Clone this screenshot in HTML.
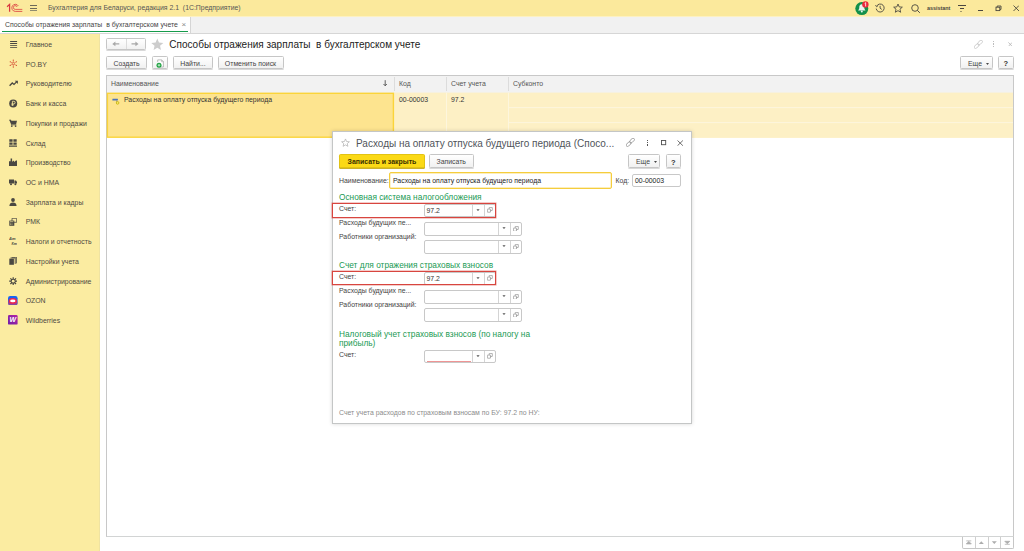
<!DOCTYPE html>
<html><head><meta charset="utf-8">
<style>
*{box-sizing:border-box;margin:0;padding:0}
html,body{width:1024px;height:551px;overflow:hidden;background:#fff}
body{font-family:"Liberation Sans",sans-serif;font-size:6.9px;color:#3b3b3b;position:relative}
.abs{position:absolute}
.t{position:absolute;white-space:nowrap;line-height:1}
#topbar{left:0;top:0;width:1024px;height:16px;background:#fbe99c}
#tabbar{left:0;top:16px;width:1024px;height:18px;background:#f1f1f1;border-bottom:1px solid #d6d6d6}
#tab{left:0;top:16px;width:191px;height:17px;background:#fff;border-right:1px solid #d5d5d5}
#tabline{left:2px;top:31px;width:186px;height:1px;background:#169b4b}
#side{left:0;top:34px;width:100px;height:517px;background:#fbeca1;border-right:1px solid #efe3a2}
.nav{left:25.7px;color:#4d4a42;font-size:6.9px}
.btn{position:absolute;border:1px solid #c6c6c6;border-radius:1.5px;background:linear-gradient(#fff,#f1f1f1);box-shadow:0 1px 0 #d9d9d9;color:#444;text-align:center;font-size:6.9px;white-space:nowrap}
.btn span{position:absolute;left:0;right:0;line-height:1}
#list{left:106px;top:75px;width:907.5px;height:461.5px;border:1px solid #c8c8c8;border-bottom-color:#d2d4d4;background:#fff}
#lhead{left:107px;top:76px;width:906px;height:17px;background:#f2f2f2}
.car{display:inline-block;width:0;height:0;border-left:1.8px solid transparent;border-right:1.8px solid transparent;border-top:2px solid #555;vertical-align:1.5px}
.car2{width:0;height:0;border-left:1.8px solid transparent;border-right:1.8px solid transparent;border-top:2px solid #555}
.inp{position:absolute;border:1px solid #c8c8c8;border-radius:2px;background:#fff}
.grp{color:#1a9a53;font-size:8.3px}
#dlg{left:332px;top:131px;width:360px;height:293px;background:#fff;border:1px solid #c4c6c6;box-shadow:0 0 4px rgba(0,0,0,.16)}
</style></head><body>

<!-- top bar -->
<div class="abs" id="topbar"></div>
<div class="t" style="left:48px;top:5.1px;color:#555">Бухгалтерия для Беларуси, редакция 2.1&nbsp; (1С:Предприятие)</div>

<!-- top icons -->
<svg class="abs" style="left:6px;top:3px" width="17" height="10" viewBox="0 0 17 10"><g fill="none" stroke="#d9383e" transform="translate(.5,.4)"><path d="M.6 3.3L3.1 1V8.3" stroke-width="1.25"/><path d="M11.9 2.6A3.55 3.55 0 1 0 8.8 8H15.8" stroke-width=".8"/><path d="M10.6 3.6A1.9 1.9 0 1 0 8.8 6H15.8" stroke-width=".75"/></g></svg>
<div class="abs" style="left:30px;top:5.1px;width:7.3px;height:1px;background:#6d6958"></div>
<div class="abs" style="left:30px;top:7.7px;width:7.3px;height:1px;background:#6d6958"></div>
<div class="abs" style="left:30px;top:10.3px;width:7.3px;height:1px;background:#8f8c70"></div>
<!-- bell -->
<svg class="abs" style="left:854.5px;top:.5px" width="15" height="15" viewBox="0 0 15 15"><circle cx="6.8" cy="7.6" r="6.5" fill="#13904a"/><path d="M6.8 3.2c-1.8 0-2.5 1.4-2.5 3 0 1.7-.6 2.6-1.3 3.3h7.6c-.7-.7-1.3-1.6-1.3-3.3 0-1.6-.7-3-2.5-3z" fill="#e9f5ee"/><circle cx="6.8" cy="10.6" r="1" fill="#e9f5ee"/><circle cx="10.4" cy="3.4" r="3.2" fill="#ea2a3c"/><path d="M9.700 2.500l.95-.8v3.700" stroke="#fff" stroke-width=".8" fill="none"/></svg>
<!-- history -->
<svg class="abs" style="left:874.5px;top:3px" width="10" height="10" viewBox="0 0 10 10"><path d="M1.6 3.2A4 4 0 1 1 1.2 5.6" fill="none" stroke="#4a4740" stroke-width=".9"/><path d="M.3 2.2l1.4 1.6 1.5-1.3" fill="none" stroke="#4a4740" stroke-width=".8"/><path d="M5.1 2.8V5.2l1.7 1.2" fill="none" stroke="#4a4740" stroke-width=".9"/></svg>
<!-- star -->
<svg class="abs" style="left:892.5px;top:3px" width="10" height="10" viewBox="0 0 24 24"><path d="M12 2.5l2.9 6.9 7.5.6-5.7 4.9 1.7 7.3L12 18.3l-6.4 3.9 1.7-7.3-5.7-4.9 7.5-.6z" fill="none" stroke="#4a4740" stroke-width="2.1" stroke-linejoin="round"/></svg>
<!-- search -->
<svg class="abs" style="left:911px;top:3.5px" width="10" height="10" viewBox="0 0 10 10"><circle cx="4" cy="4" r="3.3" fill="none" stroke="#4a4740" stroke-width=".9"/><path d="M6.4 6.4l2.4 2.4" stroke="#4a4740" stroke-width="1"/></svg>
<div class="t" style="left:927px;top:5.6px;font-size:5.4px;font-weight:bold;color:#4a4740">assistant</div>
<!-- menu -->
<div class="abs" style="left:958px;top:5.3px;width:7.5px;height:1px;background:#4a4740"></div>
<div class="abs" style="left:959.5px;top:7.7px;width:4.5px;height:1px;background:#4a4740"></div>
<div class="abs" style="left:960.3px;top:10.7px;width:0;height:0;border-left:1.5px solid transparent;border-right:1.5px solid transparent;border-top:1.7px solid #4a4740"></div>
<!-- window btns -->
<div class="abs" style="left:977.5px;top:10.2px;width:5px;height:1px;background:#4a4740"></div>
<svg class="abs" style="left:995px;top:5px" width="7" height="7" viewBox="0 0 7 7"><path d="M2.2 2V1H6V4.4H5" fill="none" stroke="#4a4740" stroke-width=".9"/><rect x="1" y="2.2" width="3.8" height="3.4" fill="none" stroke="#4a4740" stroke-width=".9"/></svg>
<svg class="abs" style="left:1012.5px;top:5px" width="6.5" height="6.5" viewBox="0 0 6.5 6.5"><path d="M.5 .5l5.5 5.5M6 .5L.5 6" stroke="#4a4740" stroke-width=".9"/></svg>
<!-- form right icons -->
<svg class="abs" style="left:973.6px;top:39.6px" width="9" height="9" viewBox="0 0 9 9"><g fill="none" stroke="#c6c6c6" stroke-width=".85"><rect x="-2.9" y="-1.4" width="5.8" height="2.8" rx="1.4" transform="translate(2.6,6.1) rotate(-45)"/><rect x="-2.9" y="-1.4" width="5.8" height="2.8" rx="1.4" transform="translate(6,2.6) rotate(-45)"/></g></svg>
<div class="abs" style="left:993.2px;top:41px;width:1.3px;height:1.3px;background:#bdbdbd"></div><div class="abs" style="left:993.2px;top:43.3px;width:1.3px;height:1.3px;background:#bdbdbd"></div><div class="abs" style="left:993.2px;top:45.6px;width:1.3px;height:1.3px;background:#bdbdbd"></div>
<svg class="abs" style="left:1007.7px;top:41.7px" width="4.6" height="4.8" viewBox="0 0 4.6 4.8"><path d="M.4 .4l3.8 4M4.2 .4l-3.8 4" stroke="#b4b4b4" stroke-width=".8"/></svg>

<!-- tab bar -->
<div class="abs" id="tabbar"></div>
<div class="abs" id="tab"></div>
<div class="abs" style="left:0;top:16px;width:1024px;height:1px;background:#fdf1c2"></div>
<div class="t" style="left:5px;top:21.5px;color:#444">Способы отражения зарплаты&nbsp; в бухгалтерском учете</div>
<div class="t" style="left:181.5px;top:20.5px;color:#888;font-size:8px">×</div>
<div class="abs" id="tabline"></div>

<!-- sidebar -->
<div class="abs" id="side"></div>
<svg class="abs" style="left:10px;top:40px" width="8" height="9" viewBox="0 0 8 9"><path d="M.1 1.5h7M.1 3.5h7" stroke="#4a4842" stroke-width="1"/><path d="M.1 5.5h7M.1 7.5h7" stroke="#6e6a55" stroke-width="1"/></svg>
<div class="t nav" style="top:41.8px">Главное</div>
<svg class="abs" style="left:9px;top:59px" width="9" height="9" viewBox="0 0 9 9"><g transform="translate(.3,.6)"><g stroke="#d44a30" stroke-width=".55"><path d="M4 .3v7.4M.8 2.1l6.4 3.8M7.2 2.1L.8 5.900"/></g><circle cx="4" cy="4" r="1.1" fill="#fbeca1" stroke="#d44a30" stroke-width=".55"/><g fill="#d44a30"><circle cx="4" cy=".5" r=".55"/><circle cx="4" cy="7.5" r=".55"/><circle cx=".9" cy="2.2" r=".55"/><circle cx="7.1" cy="2.2" r=".55"/><circle cx=".9" cy="5.8" r=".55"/><circle cx="7.1" cy="5.8" r=".55"/></g></g></svg>
<div class="t nav" style="top:61.5px">PO.BY</div>
<svg class="abs" style="left:9px;top:79px" width="10" height="9" viewBox="0 0 10 9"><path d="M.6 6.8L3.3 4 5 5.400 7.800 2.600" stroke="#4a4842" stroke-width="1.3" fill="none"/><path d="M5.800 1.800h3.100v3.100z" fill="#4a4842"/></svg>
<div class="t nav" style="top:81.3px">Руководителю</div>
<svg class="abs" style="left:9px;top:99px" width="9" height="9" viewBox="0 0 9 9"><circle cx="4.2" cy="4.4" r="4" fill="#4a4842"/><path d="M3.400 6.900V2.300h1.400a1.300 1.300 0 0 1 0 2.600H2.500M2.500 5.900h2.300" stroke="#fbeca1" stroke-width=".85" fill="none"/></svg>
<div class="t nav" style="top:101.0px">Банк и касса</div>
<svg class="abs" style="left:9.0px;top:118.9px" width="8" height="8" viewBox="0 0 8 8"><path d="M0 .8h1.6l.5 1h5.9l-.9 3.4H2.4z" fill="#4a4842"/><path d="M1.6 .8l.9 5h4.8" stroke="#4a4842" stroke-width=".8" fill="none"/><circle cx="2.8" cy="7.1" r=".9" fill="#4a4842"/><circle cx="6.6" cy="7.1" r=".9" fill="#4a4842"/></svg>
<div class="t nav" style="top:120.7px">Покупки и продажи</div>
<svg class="abs" style="left:9.0px;top:138.5px" width="8" height="8" viewBox="0 0 8 8"><path d="M.3 .3h3.3v2.5H.3zM4.4 .3h3.3v2.5H4.4zM.3 3.5h3.3v2.3H.3zM4.4 3.5h3.3v2.3H4.4zM0 6.5h8v1.2H0z" fill="#4a4842"/></svg>
<div class="t nav" style="top:140.5px">Склад</div>
<svg class="abs" style="left:9.0px;top:158.4px" width="8" height="8" viewBox="0 0 8 8"><path d="M0 8V3.2h1.6V.4h1.5v3.4L5 2.4v1.6l2-1.6h1V8z" fill="#4a4842"/></svg>
<div class="t nav" style="top:160.2px">Производство</div>
<svg class="abs" style="left:9.0px;top:178.1px" width="8" height="8" viewBox="0 0 8 8"><path d="M0 1.6h5v4H0zM5.4 2.6h1.6l1 1.4v1.6H5.4z" fill="#4a4842"/><circle cx="2" cy="6.2" r="1" fill="#4a4842"/><circle cx="6.4" cy="6.2" r="1" fill="#4a4842"/></svg>
<div class="t nav" style="top:179.9px">ОС и НМА</div>
<svg class="abs" style="left:9.0px;top:197.8px" width="8" height="8" viewBox="0 0 8 8"><circle cx="4" cy="2" r="1.9" fill="#4a4842"/><path d="M.4 8c0-2.6 1.6-3.6 3.6-3.6S7.6 5.4 7.6 8z" fill="#4a4842"/></svg>
<div class="t nav" style="top:199.6px">Зарплата и кадры</div>
<svg class="abs" style="left:9.0px;top:217.6px" width="8" height="8" viewBox="0 0 8 8"><path d="M3 .3h4.7v4H3z" fill="none" stroke="#4a4842" stroke-width=".8"/><path d="M.3 2.6h5v5.2h-5z" fill="#4a4842"/><path d="M1 3.6h3.4M1.2 5.2h.8M2.6 5.2h.8M1.2 6.5h.8M2.6 6.5h.8" stroke="#fbeca1" stroke-width=".6"/></svg>
<div class="t nav" style="top:219.4px">РМК</div>
<svg class="abs" style="left:9.0px;top:237.3px" width="8" height="8" viewBox="0 0 8 8"><text x="0" y="3.4" font-size="4" font-weight="bold" font-style="italic" fill="#4a4842" font-family="Liberation Sans">Ат</text><text x="2.6" y="7.6" font-size="3.6" font-weight="bold" font-style="italic" fill="#4a4842" font-family="Liberation Sans">Кт</text></svg>
<div class="t nav" style="top:239.1px">Налоги и отчетность</div>
<svg class="abs" style="left:9.0px;top:257.0px" width="8" height="8" viewBox="0 0 8 8"><path d="M.3 1.6h4.6v6.2H.3z" fill="#4a4842"/><path d="M1.6 .9h4.6v6M3 .2h4.7v6.2" stroke="#4a4842" stroke-width=".9" fill="none"/></svg>
<div class="t nav" style="top:258.8px">Настройки учета</div>
<svg class="abs" style="left:8.8px;top:276.8px" width="8.4" height="8.4" viewBox="0 0 8.4 8.4"><g stroke="#4a4842" stroke-width="1.2"><path d="M4.2 .2v8M.2 4.2h8M1.4 1.4l5.6 5.6M7 1.4L1.4 7"/></g><circle cx="4.2" cy="4.2" r="2.5" fill="#4a4842"/><circle cx="4.2" cy="4.2" r="1.4" fill="#fbeca1"/></svg>
<div class="t nav" style="top:278.6px">Администрирование</div>
<svg class="abs" style="left:8.4px;top:295.7px" width="9.6" height="9.3" viewBox="0 0 9.6 9.3"><rect x="0" y="0" width="9.6" height="9.3" rx="2.2" fill="#1565f5"/><path d="M0 5.5h9.6V7.1a2.2 2.2 0 0 1-2.2 2.2H2.2A2.2 2.2 0 0 1 0 7.100z" fill="#e8305a" opacity=".55"/><ellipse cx="4.8" cy="4.9" rx="4.2" ry="2.8" fill="#f0244e"/><ellipse cx="4.8" cy="4.9" rx="2.7" ry="1.3" fill="#fff"/></svg>
<div class="t nav" style="top:298.3px">OZON</div>
<svg class="abs" style="left:8.4px;top:315.2px" width="9.6" height="9.6" viewBox="0 0 9.6 9.6"><defs><linearGradient id="wb" x1="0" y1="1" x2="1" y2="0"><stop offset="0" stop-color="#6f1fa8"/><stop offset="1" stop-color="#b224a4"/></linearGradient></defs><rect x="0" y="0" width="9.6" height="9.6" rx="1.2" fill="url(#wb)"/><text x="4.8" y="7.3" font-size="7" font-weight="bold" font-style="italic" fill="#fff" text-anchor="middle" font-family="Liberation Sans">W</text></svg>
<div class="t nav" style="top:318.0px">Wildberries</div>

<!-- main -->
<div class="btn" style="left:106px;top:38px;width:40px;height:12px"></div>
<div class="abs" style="left:126px;top:39px;width:1px;height:10px;background:#dcdcdc"></div>
<svg class="abs" style="left:111.7px;top:41px" width="8" height="6" viewBox="0 0 8 6"><path d="M.3 2.9L3.4 .5V2.3H7.3V3.5H3.4V5.3z" fill="#a8a8a8"/></svg>
<svg class="abs" style="left:131.2px;top:41px" width="8" height="6" viewBox="0 0 8 6"><path d="M7.5 2.9L4.4 .5V2.3H.5V3.5H4.4V5.3z" fill="#a8a8a8"/></svg>
<svg class="abs" style="left:151.3px;top:38px" width="12.6" height="12.6" viewBox="0 0 24 24"><path d="M12 1l3.2 7.6 8.3.7-6.3 5.4 1.9 8.1L12 18.5 4.9 22.8l1.9-8.1L.5 9.3l8.3-.7z" fill="#cdcdcd"/></svg>
<div class="t" style="left:169.3px;top:39.9px;font-size:10px;color:#222">Способы отражения зарплаты&nbsp; в бухгалтерском учете</div>

<div class="btn" style="left:106px;top:56px;width:41px;height:13px"><span style="top:3.8px">Создать</span></div>
<div class="btn" style="left:152px;top:56px;width:15.5px;height:13px"></div>
<svg class="abs" style="left:155.5px;top:58.5px" width="8.5" height="9" viewBox="0 0 8.5 9"><path d="M1.7 3V.9h4L7.4 2.6V8H4.6" fill="#fff" stroke="#a3a3a3" stroke-width=".7"/><path d="M5.6 .9V2.7H7.4" fill="none" stroke="#a3a3a3" stroke-width=".6"/><circle cx="3" cy="6.2" r="2.5" fill="#18a03c"/><path d="M3 4.8v2.8M1.6 6.2h2.8" stroke="#e8f8ec" stroke-width=".8"/></svg>
<div class="btn" style="left:173px;top:56px;width:40px;height:13px"><span style="top:3.8px">Найти...</span></div>
<div class="btn" style="left:217.5px;top:56px;width:66px;height:13px"><span style="top:3.8px">Отменить поиск</span></div>
<div class="btn" style="left:960px;top:56px;width:33px;height:13px"><span style="top:3.8px;left:7px;text-align:left">Еще</span><svg class="abs" style="left:24.8px;top:5.5px" width="3" height="2" viewBox="0 0 3 2"><path d="M0 .1h3L1.5 1.9z" fill="#484848"/></svg></div>
<div class="btn" style="left:998px;top:56px;width:15.5px;height:13px"><span style="top:2.5px;font-weight:bold;font-size:7.5px;color:#333">?</span></div>

<div class="abs" id="list"></div>
<div class="abs" id="lhead"></div>
<div class="abs" style="left:394px;top:77px;width:1px;height:14px;background:#dcdcdc"></div>
<div class="abs" style="left:446px;top:77px;width:1px;height:14px;background:#dcdcdc"></div>
<div class="abs" style="left:508px;top:77px;width:1px;height:14px;background:#dcdcdc"></div>
<div class="t" style="left:111px;top:81px;color:#555">Наименование</div>
<div class="t" style="left:399px;top:81px;color:#555">Код</div>
<div class="t" style="left:451px;top:81px;color:#555">Счет учета</div>
<div class="t" style="left:513px;top:81px;color:#555">Субконто</div>
<svg class="abs" style="left:382.5px;top:80px" width="4.4" height="6.4" viewBox="0 0 4.4 6.4"><path d="M2.2 .2V5.6M.5 4L2.2 5.8 3.9 4" fill="none" stroke="#3c3c3c" stroke-width=".8"/></svg>
<!-- row -->
<svg class="abs" style="left:106px;top:92px" width="908" height="47" viewBox="0 0 908 47">
<rect x="288" y=".6" width="619" height="45.3" fill="#fdf0c5"/>
<rect x="340.1" y=".6" width=".9" height="45.3" fill="#fdf7e0"/>
<rect x="402.1" y=".6" width=".9" height="45.3" fill="#fdf7e0"/>
<rect x="403" y="15.2" width="504" height=".9" fill="#fdf7e0"/>
<rect x="403" y="30.2" width="504" height=".9" fill="#fdf7e0"/>
<rect x="1.4" y="1.3" width="286" height="43.9" fill="#fde48f" stroke="#fbd43a" stroke-width="1.4"/>
</svg>
<svg class="abs" style="left:112px;top:97.5px" width="8" height="7" viewBox="0 0 8 7"><rect x=".4" y=".8" width="5.5" height="1.7" rx=".3" fill="#4f74b8"/><path d="M4.6 2.5v1.5h.8" stroke="#8a8460" stroke-width=".6" fill="none"/><circle cx="5.6" cy="4.9" r="1.3" fill="#f8ea70" stroke="#c4b000" stroke-width=".8"/></svg>
<div class="t" style="left:124px;top:97.3px;color:#333">Расходы на оплату отпуска будущего периода</div>
<div class="t" style="left:399px;top:97.3px;color:#333">00-00003</div>
<div class="t" style="left:451px;top:97.3px;color:#333">97.2</div>
<!-- scroll buttons -->
<div class="abs" style="left:962px;top:537px;width:52px;height:11.5px;border:1px solid #c6c6c6;border-top:none;border-radius:0 0 2px 2px;background:#fff"></div>
<div class="abs" style="left:975px;top:537px;width:1px;height:11px;background:#cfcfcf"></div>
<div class="abs" style="left:987.5px;top:537px;width:1px;height:11px;background:#cfcfcf"></div>
<div class="abs" style="left:1000px;top:537px;width:1px;height:11px;background:#cfcfcf"></div>
<svg class="abs" style="left:962px;top:537px" width="52" height="11" viewBox="0 0 52 11">
<path d="M4.3 3.9h5M4.3 6.9L6.8 4.4 9.3 6.9z" fill="#adadad" stroke="#adadad" stroke-width=".8"/>
<path d="M16.8 7L19.3 4.3 21.8 7z" fill="#adadad"/>
<path d="M29.8 4.3L32.3 7 34.8 4.3z" fill="#adadad"/>
<path d="M42.8 7.3h5M42.8 4.3L45.3 6.8 47.8 4.3z" fill="#adadad" stroke="#adadad" stroke-width=".8"/>
</svg>

<!-- dialog -->
<div class="abs" id="dlg"></div>
<svg class="abs" style="left:341px;top:138px" width="9" height="9" viewBox="0 0 24 24"><path d="M12 2.5l2.9 6.9 7.5.6-5.7 4.9 1.7 7.3L12 18.3l-6.4 3.9 1.7-7.3-5.7-4.9 7.5-.6z" fill="none" stroke="#b2b2b2" stroke-width="2"/></svg>
<div class="t" style="left:356px;top:138.5px;font-size:10px;color:#50545a">Расходы на оплату отпуска будущего периода (Спосо...</div>
<svg class="abs" style="left:625.7px;top:137.8px" width="9" height="9" viewBox="0 0 9 9"><g fill="none" stroke="#959595" stroke-width=".85"><rect x="-2.9" y="-1.4" width="5.8" height="2.8" rx="1.4" transform="translate(2.6,6.1) rotate(-45)"/><rect x="-2.9" y="-1.4" width="5.8" height="2.8" rx="1.4" transform="translate(6,2.6) rotate(-45)"/></g></svg>
<div class="abs" style="left:646.5px;top:139.7px;width:1.3px;height:1.3px;background:#555"></div><div class="abs" style="left:646.5px;top:142px;width:1.3px;height:1.3px;background:#555"></div><div class="abs" style="left:646.5px;top:144.3px;width:1.3px;height:1.3px;background:#555"></div>
<svg class="abs" style="left:660.6px;top:140px" width="6" height="6" viewBox="0 0 6 6"><rect x=".5" y=".5" width="4.2" height="4.2" fill="none" stroke="#505050" stroke-width=".9"/></svg>
<svg class="abs" style="left:676.7px;top:139.6px" width="6.5" height="6.5" viewBox="0 0 6.5 6.5"><path d="M.5 .5l5.4 5.2M5.9 .5L.5 5.7" stroke="#606060" stroke-width=".9"/></svg>
<div class="btn" style="left:339px;top:154px;width:86px;height:14px;background:#fbd916;border-color:#e2c313;box-shadow:0 1px 0 #cdb22a"><span style="top:4.2px;color:#3a3000;font-weight:bold;font-size:6.95px">Записать и закрыть</span></div>
<div class="btn" style="left:429px;top:154px;width:44.5px;height:14px"><span style="top:4px">Записать</span></div>
<div class="btn" style="left:628px;top:154px;width:32px;height:14px"><span style="top:4px;left:7px;text-align:left">Еще</span><svg class="abs" style="left:24.5px;top:6px" width="3" height="2" viewBox="0 0 3 2"><path d="M0 .1h3L1.5 1.9z" fill="#484848"/></svg></div>
<div class="btn" style="left:665.5px;top:154px;width:15.5px;height:14px"><span style="top:3.5px;font-weight:bold;font-size:7.5px;color:#333">?</span></div>
<div class="t" style="left:339px;top:177.5px;color:#444">Наименование:</div>
<div class="inp" style="left:389px;top:172px;width:223px;height:16.5px;border:1px solid #f5cd3c;box-shadow:inset 0 0 0 .4px #f9dd7c"></div>
<div class="t" style="left:393px;top:177.5px;color:#222">Расходы на оплату отпуска будущего периода</div>
<div class="t" style="left:615.5px;top:177.5px;color:#444">Код:</div>
<div class="inp" style="left:632px;top:174px;width:49px;height:13px"></div>
<div class="t" style="left:635px;top:177.5px;color:#222">00-00003</div>
<div class="t grp" style="left:339px;top:192.5px">Основная система налогообложения</div>
<div class="t" style="left:339px;top:205.7px;color:#444">Счет:</div>
<div class="inp" style="left:424.0px;top:204px;width:71.5px;height:13px"></div>
<div class="abs" style="left:472.0px;top:205px;width:1px;height:11px;background:#d4d4d4"></div>
<div class="abs" style="left:483.5px;top:205px;width:1px;height:11px;background:#d4d4d4"></div>
<svg class="abs" style="left:476.2px;top:208.9px" width="4" height="2.4" viewBox="0 0 4 2.4"><path d="M.4 .3h3.2L2 2.1z" fill="#555"/></svg>
<svg class="abs" style="left:486.9px;top:207.2px" width="5.8" height="5.8" viewBox="0 0 5.8 5.8"><rect x="2.2" y=".4" width="3.1" height="3.1" rx=".25" fill="#fff" stroke="#8a8a8a" stroke-width=".65"/><rect x=".4" y="2.1" width="3.1" height="3.1" rx=".25" fill="#fff" stroke="#8a8a8a" stroke-width=".65"/></svg>
<div class="t" style="left:426.5px;top:207.7px;color:#333">97.2</div>
<div class="abs" style="left:331.5px;top:203px;width:164.5px;height:14.5px;border:1px solid #d8453f;box-shadow:0 0 0 .5px rgba(216,69,63,.55)"></div>
<div class="t" style="left:339px;top:220px;color:#444">Расходы будущих пе...</div>
<div class="inp" style="left:424.0px;top:222px;width:97.5px;height:14px"></div>
<div class="abs" style="left:498.0px;top:223px;width:1px;height:12px;background:#d4d4d4"></div>
<div class="abs" style="left:509.5px;top:223px;width:1px;height:12px;background:#d4d4d4"></div>
<svg class="abs" style="left:502.2px;top:227.4px" width="4" height="2.4" viewBox="0 0 4 2.4"><path d="M.4 .3h3.2L2 2.1z" fill="#555"/></svg>
<svg class="abs" style="left:512.9px;top:225.7px" width="5.8" height="5.8" viewBox="0 0 5.8 5.8"><rect x="2.2" y=".4" width="3.1" height="3.1" rx=".25" fill="#fff" stroke="#8a8a8a" stroke-width=".65"/><rect x=".4" y="2.1" width="3.1" height="3.1" rx=".25" fill="#fff" stroke="#8a8a8a" stroke-width=".65"/></svg>
<div class="t" style="left:339px;top:233.8px;color:#444">Работники организаций:</div>
<div class="inp" style="left:424.0px;top:240px;width:97.5px;height:14px"></div>
<div class="abs" style="left:498.0px;top:241px;width:1px;height:12px;background:#d4d4d4"></div>
<div class="abs" style="left:509.5px;top:241px;width:1px;height:12px;background:#d4d4d4"></div>
<svg class="abs" style="left:502.2px;top:245.4px" width="4" height="2.4" viewBox="0 0 4 2.4"><path d="M.4 .3h3.2L2 2.1z" fill="#555"/></svg>
<svg class="abs" style="left:512.9px;top:243.7px" width="5.8" height="5.8" viewBox="0 0 5.8 5.8"><rect x="2.2" y=".4" width="3.1" height="3.1" rx=".25" fill="#fff" stroke="#8a8a8a" stroke-width=".65"/><rect x=".4" y="2.1" width="3.1" height="3.1" rx=".25" fill="#fff" stroke="#8a8a8a" stroke-width=".65"/></svg>
<div class="t grp" style="left:339px;top:261.3px">Счет для отражения страховых взносов</div>
<div class="t" style="left:339px;top:273.7px;color:#444">Счет:</div>
<div class="inp" style="left:424.0px;top:272px;width:71.5px;height:13px"></div>
<div class="abs" style="left:472.0px;top:273px;width:1px;height:11px;background:#d4d4d4"></div>
<div class="abs" style="left:483.5px;top:273px;width:1px;height:11px;background:#d4d4d4"></div>
<svg class="abs" style="left:476.2px;top:276.9px" width="4" height="2.4" viewBox="0 0 4 2.4"><path d="M.4 .3h3.2L2 2.1z" fill="#555"/></svg>
<svg class="abs" style="left:486.9px;top:275.2px" width="5.8" height="5.8" viewBox="0 0 5.8 5.8"><rect x="2.2" y=".4" width="3.1" height="3.1" rx=".25" fill="#fff" stroke="#8a8a8a" stroke-width=".65"/><rect x=".4" y="2.1" width="3.1" height="3.1" rx=".25" fill="#fff" stroke="#8a8a8a" stroke-width=".65"/></svg>
<div class="t" style="left:426.5px;top:275.6px;color:#333">97.2</div>
<div class="abs" style="left:331.5px;top:271px;width:164.5px;height:14px;border:1px solid #d8453f;box-shadow:0 0 0 .5px rgba(216,69,63,.55)"></div>
<div class="t" style="left:339px;top:287.8px;color:#444">Расходы будущих пе...</div>
<div class="inp" style="left:424.0px;top:290px;width:97.5px;height:14px"></div>
<div class="abs" style="left:498.0px;top:291px;width:1px;height:12px;background:#d4d4d4"></div>
<div class="abs" style="left:509.5px;top:291px;width:1px;height:12px;background:#d4d4d4"></div>
<svg class="abs" style="left:502.2px;top:295.4px" width="4" height="2.4" viewBox="0 0 4 2.4"><path d="M.4 .3h3.2L2 2.1z" fill="#555"/></svg>
<svg class="abs" style="left:512.9px;top:293.7px" width="5.8" height="5.8" viewBox="0 0 5.8 5.8"><rect x="2.2" y=".4" width="3.1" height="3.1" rx=".25" fill="#fff" stroke="#8a8a8a" stroke-width=".65"/><rect x=".4" y="2.1" width="3.1" height="3.1" rx=".25" fill="#fff" stroke="#8a8a8a" stroke-width=".65"/></svg>
<div class="t" style="left:339px;top:302.3px;color:#444">Работники организаций:</div>
<div class="inp" style="left:424.0px;top:308px;width:97.5px;height:14px"></div>
<div class="abs" style="left:498.0px;top:309px;width:1px;height:12px;background:#d4d4d4"></div>
<div class="abs" style="left:509.5px;top:309px;width:1px;height:12px;background:#d4d4d4"></div>
<svg class="abs" style="left:502.2px;top:313.4px" width="4" height="2.4" viewBox="0 0 4 2.4"><path d="M.4 .3h3.2L2 2.1z" fill="#555"/></svg>
<svg class="abs" style="left:512.9px;top:311.7px" width="5.8" height="5.8" viewBox="0 0 5.8 5.8"><rect x="2.2" y=".4" width="3.1" height="3.1" rx=".25" fill="#fff" stroke="#8a8a8a" stroke-width=".65"/><rect x=".4" y="2.1" width="3.1" height="3.1" rx=".25" fill="#fff" stroke="#8a8a8a" stroke-width=".65"/></svg>
<div class="t grp" style="left:339px;top:329.6px">Налоговый учет страховых взносов (по налогу на</div>
<div class="t grp" style="left:339px;top:339px">прибыль)</div>
<div class="t" style="left:339px;top:352.4px;color:#444">Счет:</div>
<div class="inp" style="left:424.0px;top:350px;width:71.5px;height:13px"></div>
<div class="abs" style="left:472.0px;top:351px;width:1px;height:11px;background:#d4d4d4"></div>
<div class="abs" style="left:483.5px;top:351px;width:1px;height:11px;background:#d4d4d4"></div>
<svg class="abs" style="left:476.2px;top:354.9px" width="4" height="2.4" viewBox="0 0 4 2.4"><path d="M.4 .3h3.2L2 2.1z" fill="#555"/></svg>
<svg class="abs" style="left:486.9px;top:353.2px" width="5.8" height="5.8" viewBox="0 0 5.8 5.8"><rect x="2.2" y=".4" width="3.1" height="3.1" rx=".25" fill="#fff" stroke="#8a8a8a" stroke-width=".65"/><rect x=".4" y="2.1" width="3.1" height="3.1" rx=".25" fill="#fff" stroke="#8a8a8a" stroke-width=".65"/></svg>
<div class="abs" style="left:426.5px;top:360.5px;width:44.0px;height:1px;background:#ee9494"></div>
<div class="t" style="left:339px;top:410px;color:#8c8c8c">Счет учета расходов по страховым взносам по БУ: 97.2 по НУ:</div>

</body></html>
